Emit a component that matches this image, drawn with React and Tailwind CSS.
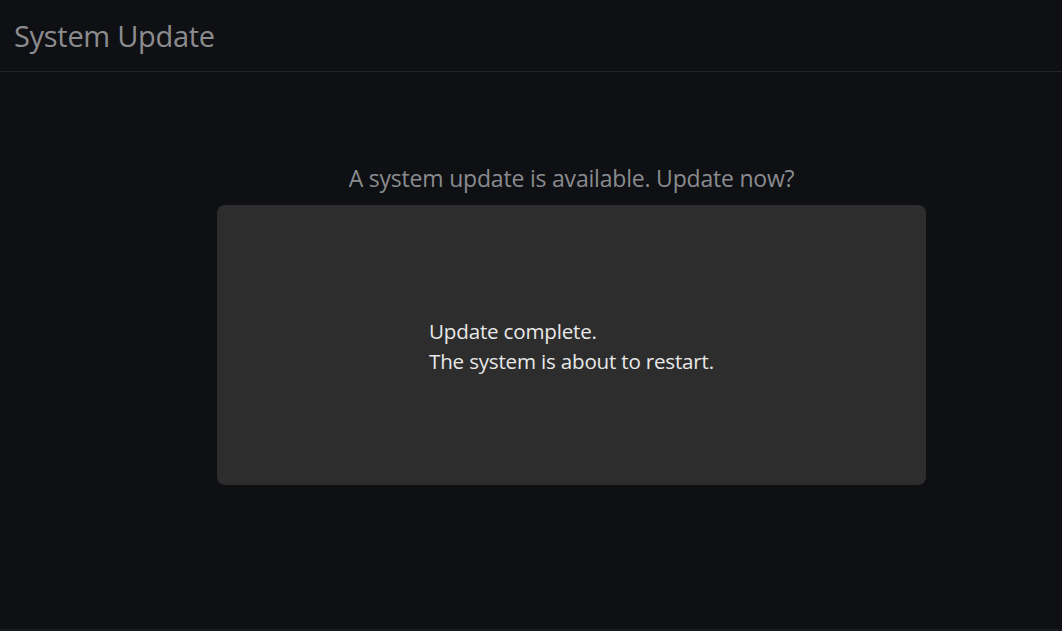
const App = () => {
  return (
    <div
      className="w-[1062px] h-[631px] bg-[#0f1014] flex flex-col overflow-hidden border-b-2 border-[#1a1b1f]"
      style={{ fontFamily: '"Open Sans", "Noto Sans", sans-serif' }}
    >
      {/* Header */}
      <div className="h-[72px] flex items-center pl-[14px] border-b border-[#24252a] shrink-0">
        <h1 className="text-[29px] text-[#8c8c8e] tracking-[-0.3px] leading-none">System Update</h1>
      </div>

      {/* Body */}
      <div className="flex flex-col ml-[217px] w-[709px] pt-[95px]">
        <p className="text-center text-[23px] text-[#8a8b8e] leading-none tracking-[-0.2px]">
          A system update is available. Update now?
        </p>
        <div className="mt-[15px] h-[280px] rounded-[8px] bg-[#2d2d2d] flex items-center justify-center">
          <div className="text-[20.6px] text-[#e8e8e8] leading-[30px] tracking-[-0.2px] pt-[2px]">
            <p>Update complete.</p>
            <p>The system is about to restart.</p>
          </div>
        </div>
      </div>
    </div>
  );
};

export default App;
